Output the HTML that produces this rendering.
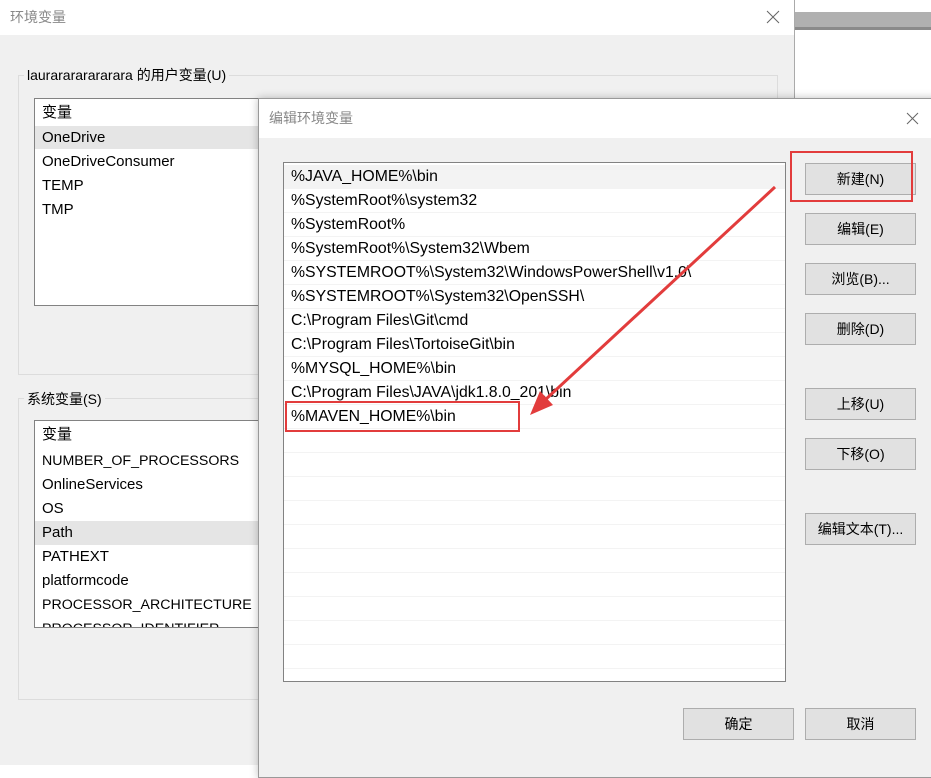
<!DOCTYPE html>
<html><head><meta charset="utf-8"><style>
body{margin:0;width:931px;height:765px;position:relative;overflow:hidden;background:#fff;font-family:"Liberation Sans","Noto Sans CJK SC",sans-serif;font-size:15px;color:#000}
.a{position:absolute;box-sizing:border-box}
.btn{position:absolute;box-sizing:border-box;background:#e1e1e1;border:1px solid #adadad;text-align:center;font-size:14px;line-height:30px;width:111px;height:32px}
.row{position:absolute;left:0;right:0;height:24px;line-height:24px;padding-left:7px;border-bottom:1px solid #f3f3f3;box-sizing:border-box;font-size:15.8px}
.lrow{position:absolute;left:0;right:0;height:24px;line-height:24px;padding-left:7px}
.s{font-size:14.2px}
</style></head><body>
<div class="a" style="left:794px;top:12px;width:137px;height:18px;background:#b0b0b0;border-bottom:3px solid #8a8a8a"></div>
<!-- back dialog -->
<div class="a" style="left:0;top:0;width:795px;height:765px;background:#f0f0f0;border-right:1px solid #aaa">
 <div class="a" style="left:0;top:0;width:794px;height:35px;background:#fff;color:#888;line-height:34px;padding-left:10px;font-size:14px">环境变量<svg style="position:absolute;left:766px;top:10px" width="14" height="14"><path d="M1 1L13 13M13 1L1 13" stroke="#666" stroke-width="1"/></svg></div>
 <div class="a" style="left:18px;top:75px;width:760px;height:300px;border:1px solid #dcdcdc"></div>
 <div class="a" style="left:24px;top:64px;background:#f0f0f0;padding:0 3px;font-size:14px;line-height:22px">laurarararararara 的用户变量(U)</div>
 <div class="a" style="left:34px;top:98px;width:728px;height:208px;background:#fff;border:1px solid #828282">
  <div class="lrow" style="top:2px">变量</div>
  <div class="lrow" style="top:27px;background:#e5e5e5;height:23px">OneDrive</div>
  <div class="lrow" style="top:51px">OneDriveConsumer</div>
  <div class="lrow" style="top:75px">TEMP</div>
  <div class="lrow" style="top:99px">TMP</div>
 </div>
 <div class="a" style="left:18px;top:398px;width:760px;height:302px;border:1px solid #dcdcdc"></div>
 <div class="a" style="left:24px;top:388px;background:#f0f0f0;padding:0 3px;font-size:14px;line-height:22px">系统变量(S)</div>
 <div class="a" style="left:34px;top:420px;width:728px;height:208px;background:#fff;border:1px solid #828282;overflow:hidden">
  <div class="lrow" style="top:2px">变量</div>
  <div class="lrow s" style="top:28px">NUMBER_OF_PROCESSORS</div>
  <div class="lrow" style="top:52px">OnlineServices</div>
  <div class="lrow" style="top:76px">OS</div>
  <div class="lrow" style="top:100px;background:#e5e5e5">Path</div>
  <div class="lrow" style="top:124px">PATHEXT</div>
  <div class="lrow" style="top:148px">platformcode</div>
  <div class="lrow s" style="top:172px">PROCESSOR_ARCHITECTURE</div>
  <div class="lrow s" style="top:196px">PROCESSOR_IDENTIFIER</div>
 </div>
</div>
<!-- front dialog -->
<div class="a" style="left:258px;top:98px;width:680px;height:680px;background:#f0f0f0;border:1px solid #999;box-shadow:0 0 8px rgba(0,0,0,.25)">
 <div class="a" style="left:0;top:0;width:680px;height:39px;background:#fff;color:#888;line-height:38px;padding-left:10px;font-size:14px">编辑环境变量<svg style="position:absolute;left:647px;top:13px" width="13" height="13"><path d="M1 1L12 12M12 1L1 12" stroke="#666" stroke-width="1"/></svg></div>
</div>
<div class="a" style="left:283px;top:162px;width:503px;height:520px;background:#fff;border:1px solid #828282">
 <div class="row" style="top:2px;background:#f3f3f3">%JAVA_HOME%\bin</div>
 <div class="row" style="top:26px">%SystemRoot%\system32</div>
 <div class="row" style="top:50px">%SystemRoot%</div>
 <div class="row" style="top:74px">%SystemRoot%\System32\Wbem</div>
 <div class="row" style="top:98px">%SYSTEMROOT%\System32\WindowsPowerShell\v1.0\</div>
 <div class="row" style="top:122px">%SYSTEMROOT%\System32\OpenSSH\</div>
 <div class="row" style="top:146px">C:\Program Files\Git\cmd</div>
 <div class="row" style="top:170px">C:\Program Files\TortoiseGit\bin</div>
 <div class="row" style="top:194px">%MYSQL_HOME%\bin</div>
 <div class="row" style="top:218px">C:\Program Files\JAVA\jdk1.8.0_201\bin</div>
 <div class="row" style="top:242px">%MAVEN_HOME%\bin</div>
 <div class="row" style="top:266px"></div><div class="row" style="top:290px"></div><div class="row" style="top:314px"></div><div class="row" style="top:338px"></div><div class="row" style="top:362px"></div><div class="row" style="top:386px"></div><div class="row" style="top:410px"></div><div class="row" style="top:434px"></div><div class="row" style="top:458px"></div><div class="row" style="top:482px"></div>
</div>
<div class="btn" style="left:805px;top:163px">新建(N)</div>
<div class="btn" style="left:805px;top:213px">编辑(E)</div>
<div class="btn" style="left:805px;top:263px">浏览(B)...</div>
<div class="btn" style="left:805px;top:313px">删除(D)</div>
<div class="btn" style="left:805px;top:388px">上移(U)</div>
<div class="btn" style="left:805px;top:438px">下移(O)</div>
<div class="btn" style="left:805px;top:513px">编辑文本(T)...</div>
<div class="btn" style="left:683px;top:708px">确定</div>
<div class="btn" style="left:805px;top:708px">取消</div>
<div class="a" style="left:790px;top:151px;width:123px;height:51px;border:2px solid #e23c3c"></div>
<div class="a" style="left:285px;top:401px;width:235px;height:31px;border:2px solid #e23c3c"></div>
<svg class="a" style="left:0;top:0" width="931" height="765"><line x1="775" y1="187" x2="545" y2="400" stroke="#e23c3c" stroke-width="3"/><polygon points="530,415 540,391 553,405" fill="#e23c3c"/></svg>
</body></html>
